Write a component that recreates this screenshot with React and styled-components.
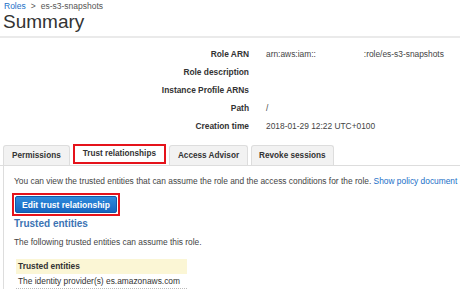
import React from "react";
import styled, { createGlobalStyle } from "styled-components";

const Global = createGlobalStyle`
body{margin:0;background:#fff;font-family:"Liberation Sans",Arial,sans-serif;color:#333;}
`
const Page = styled.div`
width:460px;
height:292px;
overflow:hidden;
white-space:nowrap;
`
const Crumbs = styled.div`
display:flex;
align-items:center;
gap:5px;
padding:1px 0 0 4px;
font-size:8.5px;
color:#555;
`
const Link = styled.a`
color:#1a6fc7;
text-decoration:none;
`
const Title = styled.h1`
margin:0;
padding:0 0 3px 3px;
font-size:19px;
font-weight:normal;
color:#333;
border-bottom:2px solid #eaeaea;
`
const Details = styled.div`
display:grid;
grid-template-columns:249px 1fr;
column-gap:17px;
margin-top:7px;
font-size:8.4px;
`
const Label = styled.div`
text-align:right;
font-weight:bold;
height:18px;
line-height:18px;
`
const Value = styled.div`
height:18px;
line-height:18px;
color:#444;
`
const Gap = styled.span`
display:inline-block;
width:${p=>p.$w}px;
`
const Tabs = styled.div`
display:flex;
align-items:flex-end;
margin-top:9px;
padding-left:3px;
gap:3px;
border-bottom:1px solid #ddd;
`
const Tab = styled.div`
font-size:8.2px;
font-weight:bold;
padding:0 ${p=>p.$pad}px;
height:${p=>p.$active?16:19}px;
line-height:${p=>p.$active?16:19}px;
background:${p=>p.$active?"#fff":"#f2f2f2"};
border:${p=>p.$active?"2px solid #e5131b":"1px solid #ddd"};
border-bottom:${p=>p.$active?"2px solid #e5131b":"none"};
border-radius:${p=>p.$active?"0":"3px 3px 0 0"};
margin-bottom:${p=>p.$active?"1px":"0"};
color:#333;
`
const Panel = styled.div`
margin-left:3px;
border-left:1px solid #ddd;
padding:10px 0 0 10px;
font-size:8.4px;
`
const Intro = styled.div`
color:#444;
`
const BtnFrame = styled.div`
display:inline-block;
margin:7px 0 0 -2px;
border:2px solid #e5131b;
padding:1px;
`
const Button = styled.button`
display:block;
font-family:inherit;
font-size:8.5px;
font-weight:bold;
color:#fff;
background:linear-gradient(#2e8bdc,#1766c0);
border:1px solid #1359a8;
border-radius:2px;
height:17px;
width:102px;
padding:0;
`
const Heading = styled.div`
margin-top:2px;
font-size:10px;
font-weight:bold;
color:#3b73b3;
`
const Sub = styled.div`
margin-top:8px;
color:#444;
`
const Table = styled.div`
margin:12px 0 0 2px;
width:171px;
`
const Th = styled.div`
background:#fbf6d5;
font-weight:bold;
padding:0 2px;
height:15px;
line-height:15px;
`
const Td = styled.div`
padding:0 2px;
height:14px;
line-height:14px;
color:#333;
border-bottom:1px dotted #bbb;
`

const rows = [
  ["Role ARN", <span>arn:aws:iam::<Gap $w={48} />:role/es-s3-snapshots</span>],
  ["Role description", ""],
  ["Instance Profile ARNs", ""],
  ["Path", "/"],
  ["Creation time", "2018-01-29 12:22 UTC+0100"],
]

export default function App(){
  return (
    <Page>
      <Global />
      <Crumbs><Link>Roles</Link><span>&gt;</span><span>es-s3-snapshots</span></Crumbs>
      <Title>Summary</Title>
      <Details>
        {rows.map(([l,v])=>(
          <React.Fragment key={l}><Label>{l}</Label><Value>{v}</Value></React.Fragment>
        ))}
      </Details>
      <Tabs>
        <Tab $pad={8}>Permissions</Tab>
        <Tab $pad={8} $active>Trust relationships</Tab>
        <Tab $pad={8}>Access Advisor</Tab>
        <Tab $pad={7}>Revoke sessions</Tab>
      </Tabs>
      <Panel>
        <Intro>You can view the trusted entities that can assume the role and the access conditions for the role. <Link>Show policy document</Link></Intro>
        <BtnFrame><Button>Edit trust relationship</Button></BtnFrame>
        <Heading>Trusted entities</Heading>
        <Sub>The following trusted entities can assume this role.</Sub>
        <Table>
          <Th>Trusted entities</Th>
          <Td>The identity provider(s) es.amazonaws.com</Td>
        </Table>
      </Panel>
    </Page>
  )
}
